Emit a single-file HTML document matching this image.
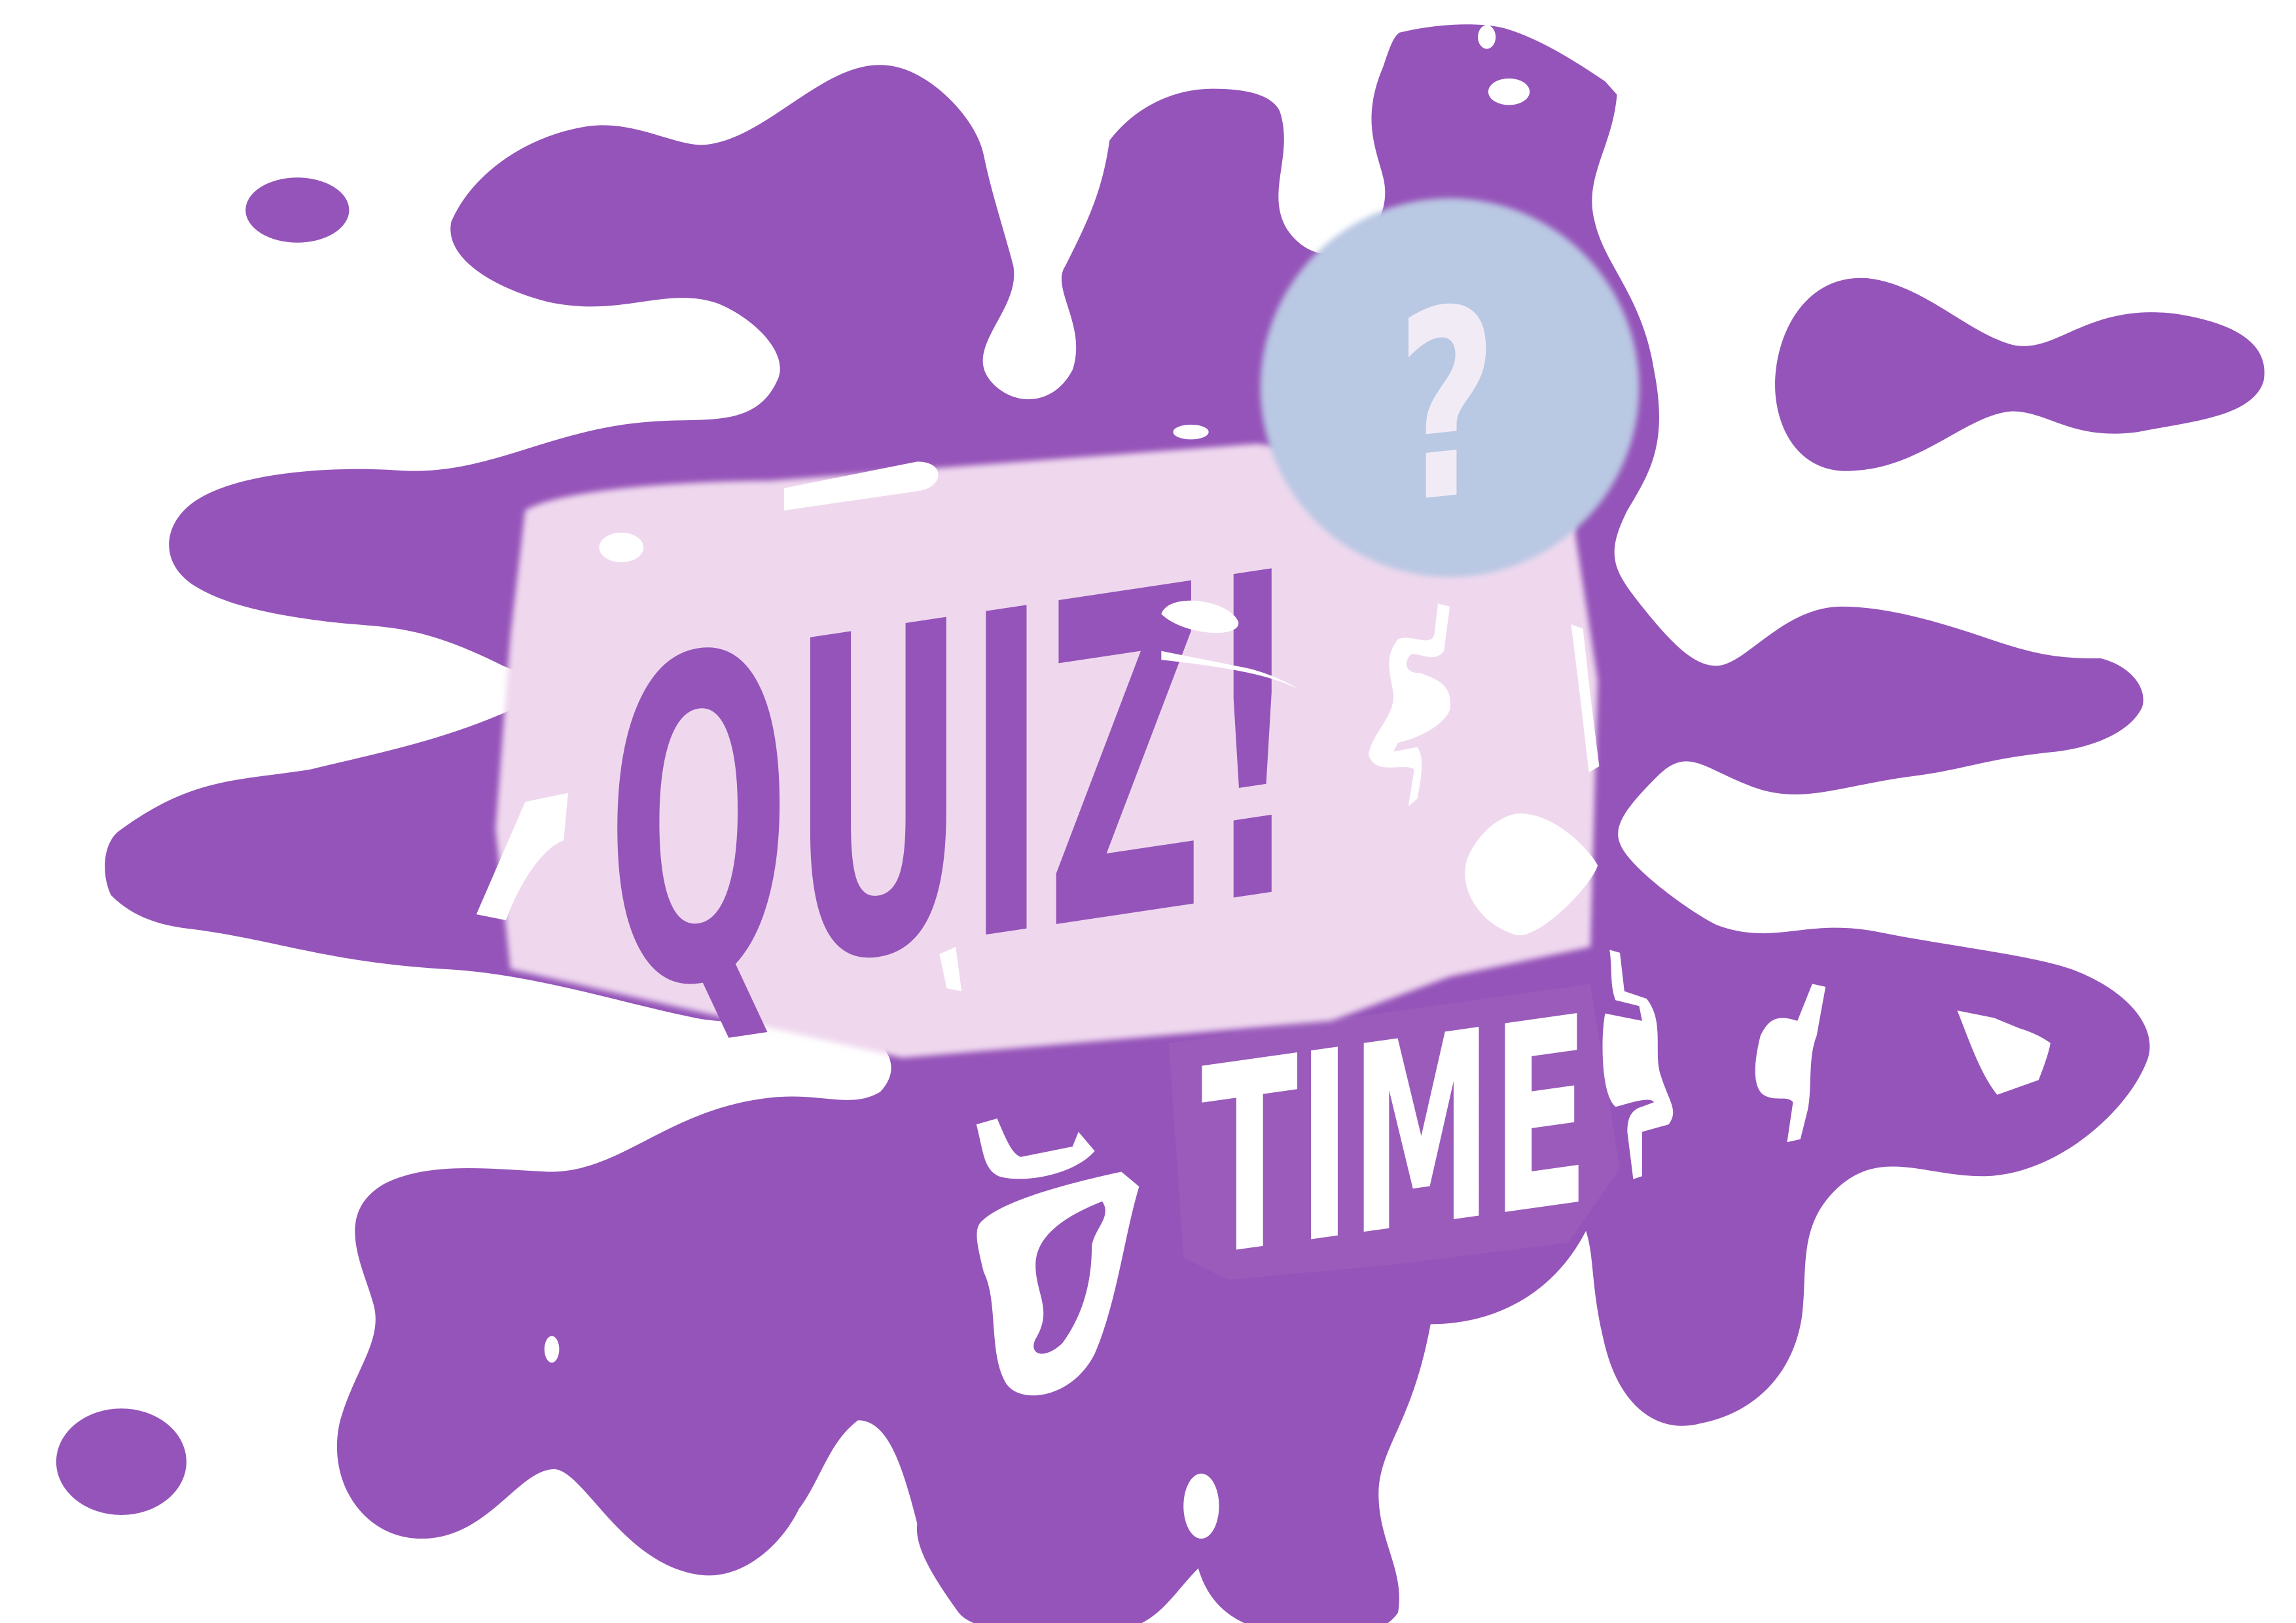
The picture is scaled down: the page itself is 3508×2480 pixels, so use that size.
<!DOCTYPE html>
<html><head><meta charset="utf-8"><style>
html,body{margin:0;padding:0;background:#fff;width:3508px;height:2480px;overflow:hidden}
svg{display:block}
</style></head><body>
<svg width="3508" height="2480" viewBox="0 0 1552 1097" preserveAspectRatio="none" xmlns="http://www.w3.org/2000/svg">
<defs><filter id="b" x="-5%" y="-5%" width="110%" height="110%"><feGaussianBlur stdDeviation="2"/></filter></defs>
<rect width="1552" height="1097" fill="#fff"/>
<g fill="#9554b9">
<path d="M305,150 C320,115 360,90 400,85 C430,82 455,98 475,98 C520,95 560,35 605,45 C630,50 660,80 665,105 C670,130 680,160 685,180 C690,210 650,235 670,258 C685,275 712,275 725,250 C735,220 710,195 720,180 C735,150 745,130 750,95 C765,75 790,60 820,60 C845,60 860,65 865,75 C875,105 855,130 870,155 C880,170 895,175 910,170 C930,160 940,140 935,120 C930,100 920,80 935,45 C940,30 942,25 946,22 C975,15 1005,15 1020,20 C1045,28 1070,45 1085,55 L1093,64 C1090,100 1070,120 1078,150 C1085,180 1110,200 1118,250 C1128,300 1115,320 1100,345 C1085,375 1090,385 1110,410 C1130,435 1145,450 1160,450 C1180,450 1205,410 1245,410 C1275,410 1310,420 1345,432 C1380,444 1395,445 1420,445 C1440,450 1452,465 1448,478 C1440,495 1415,505 1390,508 C1340,513 1330,520 1290,525 C1240,532 1215,545 1180,530 C1150,518 1140,505 1120,525 C1100,545 1090,558 1095,570 C1100,585 1140,615 1160,625 C1200,640 1220,620 1270,630 C1320,640 1370,645 1400,655 C1440,670 1458,695 1452,715 C1440,750 1390,795 1340,795 C1300,795 1270,775 1240,805 C1215,830 1222,860 1218,890 C1212,930 1185,955 1150,962 C1120,970 1095,950 1085,910 C1075,870 1078,850 1072,832 C1050,875 1010,895 967,895 C955,960 935,975 932,1005 C930,1040 950,1060 945,1090 C935,1105 910,1108 880,1105 C850,1104 820,1095 810,1060 C790,1080 780,1105 740,1103 C700,1103 660,1105 648,1090 C630,1065 618,1045 620,1030 C610,990 600,960 580,960 C560,975 555,1000 540,1020 C528,1045 500,1070 470,1064 C420,1055 395,995 375,993 C350,993 330,1040 285,1040 C245,1040 220,1000 230,960 C240,925 260,905 252,880 C245,855 225,820 260,800 C290,785 330,790 370,792 C420,793 450,750 520,742 C555,738 575,750 595,738 C612,720 598,700 570,692 C545,685 505,695 470,688 C420,678 360,658 300,655 C220,650 185,635 130,628 C100,625 85,615 75,605 C68,590 70,570 80,562 C130,525 160,528 210,520 C260,508 300,500 345,480 C370,468 365,460 340,450 C280,420 260,425 220,420 C180,415 150,408 130,395 C108,380 110,355 130,340 C160,318 230,315 270,318 C330,322 370,290 440,285 C475,282 510,290 525,258 C535,240 510,215 485,205 C450,193 420,215 370,204 C335,195 300,175 305,150 Z"/>
<ellipse cx="201" cy="142" rx="35" ry="22"/>
<path d="M1200,265 C1198,230 1218,185 1262,188 C1300,192 1330,225 1360,233 C1390,240 1410,205 1470,212 C1510,218 1535,232 1530,258 C1522,282 1480,285 1445,292 C1400,298 1385,278 1360,278 C1330,280 1300,315 1255,318 C1220,322 1202,295 1200,265 Z"/>
<ellipse cx="82" cy="988" rx="44" ry="36"/>
</g>
<path d="M790,705 L1075,665 L1095,790 L1060,840 L940,855 L830,865 L800,850 Z" fill="#9a5cbb" opacity="0.9"/>
<path d="M355,345 C380,330 470,325 520,325 L850,300 L1060,330 L1080,460 L1075,640 L980,660 L900,690 L610,715 L345,655 L335,560 L345,430 Z" fill="#efd8ee" filter="url(#b)"/>
<circle cx="980" cy="262" r="128" fill="#b9c8e3" filter="url(#b)"/>
<g transform="translate(978,335) skewY(-6)">
<text x="0" y="0" font-family="DejaVu Sans Condensed, Liberation Sans Narrow, sans-serif" font-weight="bold" font-size="175" fill="#f1ebf6" text-anchor="middle" textLength="68" lengthAdjust="spacingAndGlyphs">?</text>
</g>
<g transform="translate(410,670) skewY(-8.5)">
<text x="0" y="0" font-family="DejaVu Sans Condensed, Liberation Sans Narrow, sans-serif" font-weight="bold" font-size="300" fill="#9554b9" textLength="470" lengthAdjust="spacingAndGlyphs">QUIZ!</text>
</g>
<g transform="translate(812,848) skewY(-8)">
<text x="0" y="0" font-family="DejaVu Sans Condensed, Liberation Sans Narrow, sans-serif" font-weight="bold" font-size="175" fill="#fff" textLength="262" lengthAdjust="spacingAndGlyphs">TIME</text>
</g>
<g fill="#fff">
<ellipse cx="420" cy="370" rx="15" ry="10"/>
<path d="M530,330 L620,312 C640,312 638,330 620,332 L530,345 Z"/>
<ellipse cx="805" cy="292" rx="12" ry="5"/>
<ellipse cx="1020" cy="62" rx="14" ry="9"/>
<ellipse cx="1005" cy="25" rx="6" ry="8"/>
<path d="M1025,550 C1050,548 1075,575 1080,585 C1075,600 1040,635 1025,632 C1000,625 985,600 992,580 C998,565 1012,552 1025,550 Z"/>
<path d="M322,618 L355,542 L384,536 L381,568 C365,574 350,600 342,622 Z"/>
<path d="M785,415 C790,400 830,405 837,420 C840,432 800,430 785,415 Z"/>
<path d="M785,440 L845,452 C860,456 872,462 878,466 C862,458 840,452 785,446 Z"/>
<path d="M664,825 C680,810 730,798 758,792 L770,802 C760,835 755,880 740,915 C725,945 690,950 680,935 C668,915 675,880 665,860 C660,840 658,830 664,825 Z M745,812 C725,820 700,833 700,855 C700,875 712,885 700,905 C695,915 705,920 718,908 C735,885 738,860 738,842 C740,830 752,822 745,812 Z" fill-rule="evenodd"/>
<path d="M660,760 L674,756 C680,770 684,780 690,782 L725,775 L729,765 L740,778 C725,795 690,800 675,795 C665,790 665,780 660,760 Z"/>
<ellipse cx="812" cy="1018" rx="12" ry="22"/>
<ellipse cx="373" cy="912" rx="5" ry="9"/>
<path d="M1062,422 L1070,425 L1075,470 L1081,518 L1074,522 L1068,470 Z"/>
<path d="M1088,642 L1095,644 L1098,670 L1113,675 C1125,690 1118,710 1122,725 C1128,745 1135,750 1128,760 L1110,765 L1110,795 L1104,797 L1100,765 C1100,755 1103,750 1110,748 L1118,745 C1115,740 1095,748 1092,748 C1082,740 1082,700 1085,685 L1110,690 L1108,680 L1092,676 C1088,665 1090,655 1088,642 Z"/>
<path d="M1225,665 L1234,667 L1228,700 C1222,715 1225,735 1222,750 L1217,770 L1208,772 L1212,745 C1208,740 1200,745 1192,740 C1185,735 1185,720 1190,700 C1195,690 1200,685 1215,690 Z"/>
<path d="M1323,683 L1348,688 L1365,695 C1375,698 1382,702 1386,705 C1385,712 1380,725 1378,730 L1350,740 C1338,725 1330,700 1323,683 Z"/>
<path d="M972,408 L980,410 L976,440 C970,448 962,442 954,442 C948,448 950,455 960,455 C975,460 982,465 980,480 C975,492 955,500 945,502 L942,508 L958,505 C962,510 962,520 958,540 L952,545 L956,520 C948,515 930,525 925,510 C928,495 942,485 942,470 C940,455 935,445 945,432 C955,428 970,440 970,425 Z"/>
<path d="M635,645 L646,640 L650,670 L640,668 Z"/>
</g>
</svg>
</body></html>
